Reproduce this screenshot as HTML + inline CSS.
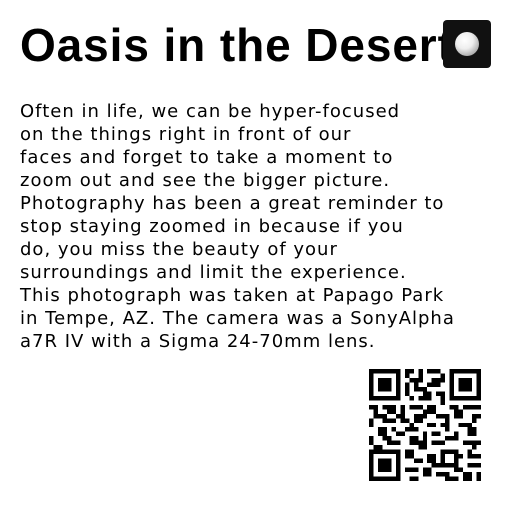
<!DOCTYPE html>
<html><head><meta charset="utf-8"><style>
html,body{margin:0;padding:0;background:#fff;width:512px;height:512px;overflow:hidden}
.t{position:absolute;left:20px;top:22px;font:bold 46px/46px "Liberation Sans",sans-serif;color:#000;white-space:nowrap;letter-spacing:0.9px}
.p{position:absolute;left:20px;top:100px;font:18px/23px "DejaVu Sans",sans-serif;color:#000;white-space:nowrap;letter-spacing:1.0px}
.ic{position:absolute;left:443px;top:20px;width:48px;height:48px;background:#111;border-radius:4px;z-index:2}
.ic div{position:absolute;left:12px;top:12px;width:24px;height:24px;border-radius:50%;background:radial-gradient(circle at 40% 35%,#fff 0,#eee 40%,#999 85%,#555 100%)}
svg{position:absolute;left:369px;top:369px}
</style></head><body>
<div class="t">Oasis in the Desert</div>
<div class="ic"><div></div></div>
<div class="p">Often in life, we can be hyper-focused<br>on the things right in front of our<br>faces and forget to take a moment to<br>zoom out and see the bigger picture.<br>Photography has been a great reminder to<br>stop staying zoomed in because if you<br>do, you miss the beauty of your<br>surroundings and limit the experience.<br>This photograph was taken at Papago Park<br>in Tempe, AZ. The camera was a SonyAlpha<br>a7R IV with a Sigma 24-70mm lens.</div>
<svg width="112" height="112" viewBox="0 0 25 25" shape-rendering="crispEdges">
<g fill="#000">
<path d="M0 0h7v7h-7zM18 0h7v7h-7zM0 18h7v7h-7z"/>
</g>
<g fill="#fff"><path d="M1 1h5v5h-5zM19 1h5v5h-5zM1 19h5v5h-5z"/></g>
<g fill="#000"><path d="M2 2h3v3h-3zM20 2h3v3h-3zM2 20h3v3h-3z"/>
<path d="M8 0h2v1h-2zM11 0h1v2h-1zM13 0h3v1h-3zM9 2h3v1h-3zM14 2h2v2h-2zM8 3h1v3h-1zM10 4h3v1h-3zM12 5h2v2h-2zM15 5h2v1h-2zM9 6h1v1h-1zM11 6h1v1h-1zM16 6h1v2h-1zM8 1h1v1h-1zM16 1h1v2h-1zM10 3h1v1h-1zM13 3h1v1h-1z
M0 8h2v1h-2zM3 8h3v1h-3zM7 8h1v2h-1zM9 8h3v1h-3zM13 8h2v2h-2zM18 8h2v1h-2zM21 8h4v1h-4z
M1 9h1v2h-1zM4 9h2v1h-2zM10 10h2v2h-2zM15 10h3v1h-3zM19 9h2v2h-2zM23 10h2v1h-2zM2 10h2v1h-2zM6 10h2v1h-2zM12 9h1v2h-1z
M0 11h1v2h-1zM3 11h3v1h-3zM7 11h2v1h-2zM13 12h2v1h-2zM17 11h1v3h-1zM20 12h3v1h-3zM9 12h1v1h-1zM23 11h1v1h-1z
M2 13h2v2h-2zM5 13h1v1h-1zM8 13h3v1h-3zM12 14h1v2h-1zM14 14h2v1h-2zM19 14h1v2h-1zM22 13h2v2h-2zM6 14h2v1h-2zM16 12h1v1h-1z
M0 15h1v2h-1zM4 16h3v1h-3zM9 15h2v2h-2zM14 16h3v1h-3zM21 16h4v1h-4zM1 17h2v1h-2zM3 15h2v1h-2zM17 15h2v1h-2zM11 16h2v1h-2z
M8 18h2v2h-2zM11 17h2v1h-2zM16 18h4v4h-4zM22 18h1v2h-1zM23 17h1v1h-1zM20 19h1v1h-1z
M10 20h2v1h-2zM13 19h2v2h-2zM8 22h3v1h-3zM12 22h2v2h-2zM22 21h3v1h-3zM21 23h2v2h-2zM24 23h1v2h-1zM9 24h2v1h-2zM15 23h3v1h-3zM17 24h3v1h-3zM14 21h2v1h-2zM19 22h2v1h-2zM23 19h2v1h-2z"/></g>
<path fill="#fff" d="M17 19h2v2h-2z"/>
</svg>
</body></html>
